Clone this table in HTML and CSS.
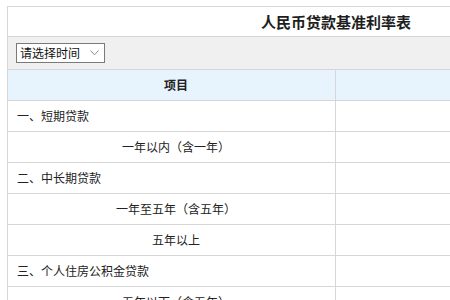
FILE: index.html
```html
<!DOCTYPE html>
<html lang="zh-CN">
<head>
<meta charset="utf-8">
<title>人民币贷款基准利率表</title>
<link rel="stylesheet" href="styles.css">
</head>
<body>
<table class="sheet">
  <colgroup><col class="col-item"><col class="col-rate"></colgroup>
  <tr class="title-row"><td colspan="2">人民币贷款基准利率表</td></tr>
  <tr class="tool-row"><td colspan="2">
    <span class="picker">请选择时间<svg class="chev" width="9" height="6" viewBox="0 0 9 6"><path d="M0.5 0.5 L4.5 4.8 L8.5 0.5" fill="none" stroke="#8a8a8a" stroke-width="1"/></svg></span>
  </td></tr>
  <tr class="head-row"><td>项目</td><td></td></tr>
  <tr><td class="left">一、短期贷款</td><td></td></tr>
  <tr><td class="mid">一年以内（含一年）</td><td></td></tr>
  <tr><td class="left">二、中长期贷款</td><td></td></tr>
  <tr><td class="mid">一年至五年（含五年）</td><td></td></tr>
  <tr><td class="mid">五年以上</td><td></td></tr>
  <tr><td class="left">三、个人住房公积金贷款</td><td></td></tr>
  <tr><td class="mid">五年以下（含五年）</td><td></td></tr>
  <tr><td class="mid">五年以上</td><td></td></tr>
</table>
</body>
</html>
```
FILE: styles.css
```css
html, body {
  margin: 0;
  padding: 0;
  background: #fff;
  overflow: hidden;
}
body {
  padding: 6px 0 0 7px;
  font-family: "Noto Sans CJK SC", "Noto Sans", sans-serif;
  font-size: 12px;
  color: #222;
}
.sheet {
  width: 657px;
  border-collapse: collapse;
  table-layout: fixed;
}
.col-item { width: 328px; }
.col-rate { width: 329px; }
.sheet td {
  border: 1px solid #d6d6d6;
  height: 31px;
  padding: 0 0 0 9px;
  line-height: 16px;
  vertical-align: middle;
  box-sizing: border-box;
}
.sheet td.left { text-align: left; }
.sheet td.mid { text-align: center; }
.title-row td {
  height: 30px;
  padding: 0;
  text-align: center;
  font-size: 15px;
  font-weight: bold;
  color: #1e1e1e;
}
.tool-row td {
  height: 33px;
  background: #f0f0f0;
  padding: 0 0 0 8px;
}
.head-row td {
  height: 31px;
  background: #e8f4fd;
  text-align: center;
  font-weight: bold;
  color: #222;
}
.picker {
  display: inline-flex;
  align-items: center;
  justify-content: space-between;
  box-sizing: border-box;
  width: 89px;
  height: 20px;
  padding: 0 5px 0 3px;
  border: 1px solid #7a7a7a;
  background: #fff;
  font-size: 12px;
  color: #111;
  vertical-align: middle;
}
.chev { display: block; }
```
